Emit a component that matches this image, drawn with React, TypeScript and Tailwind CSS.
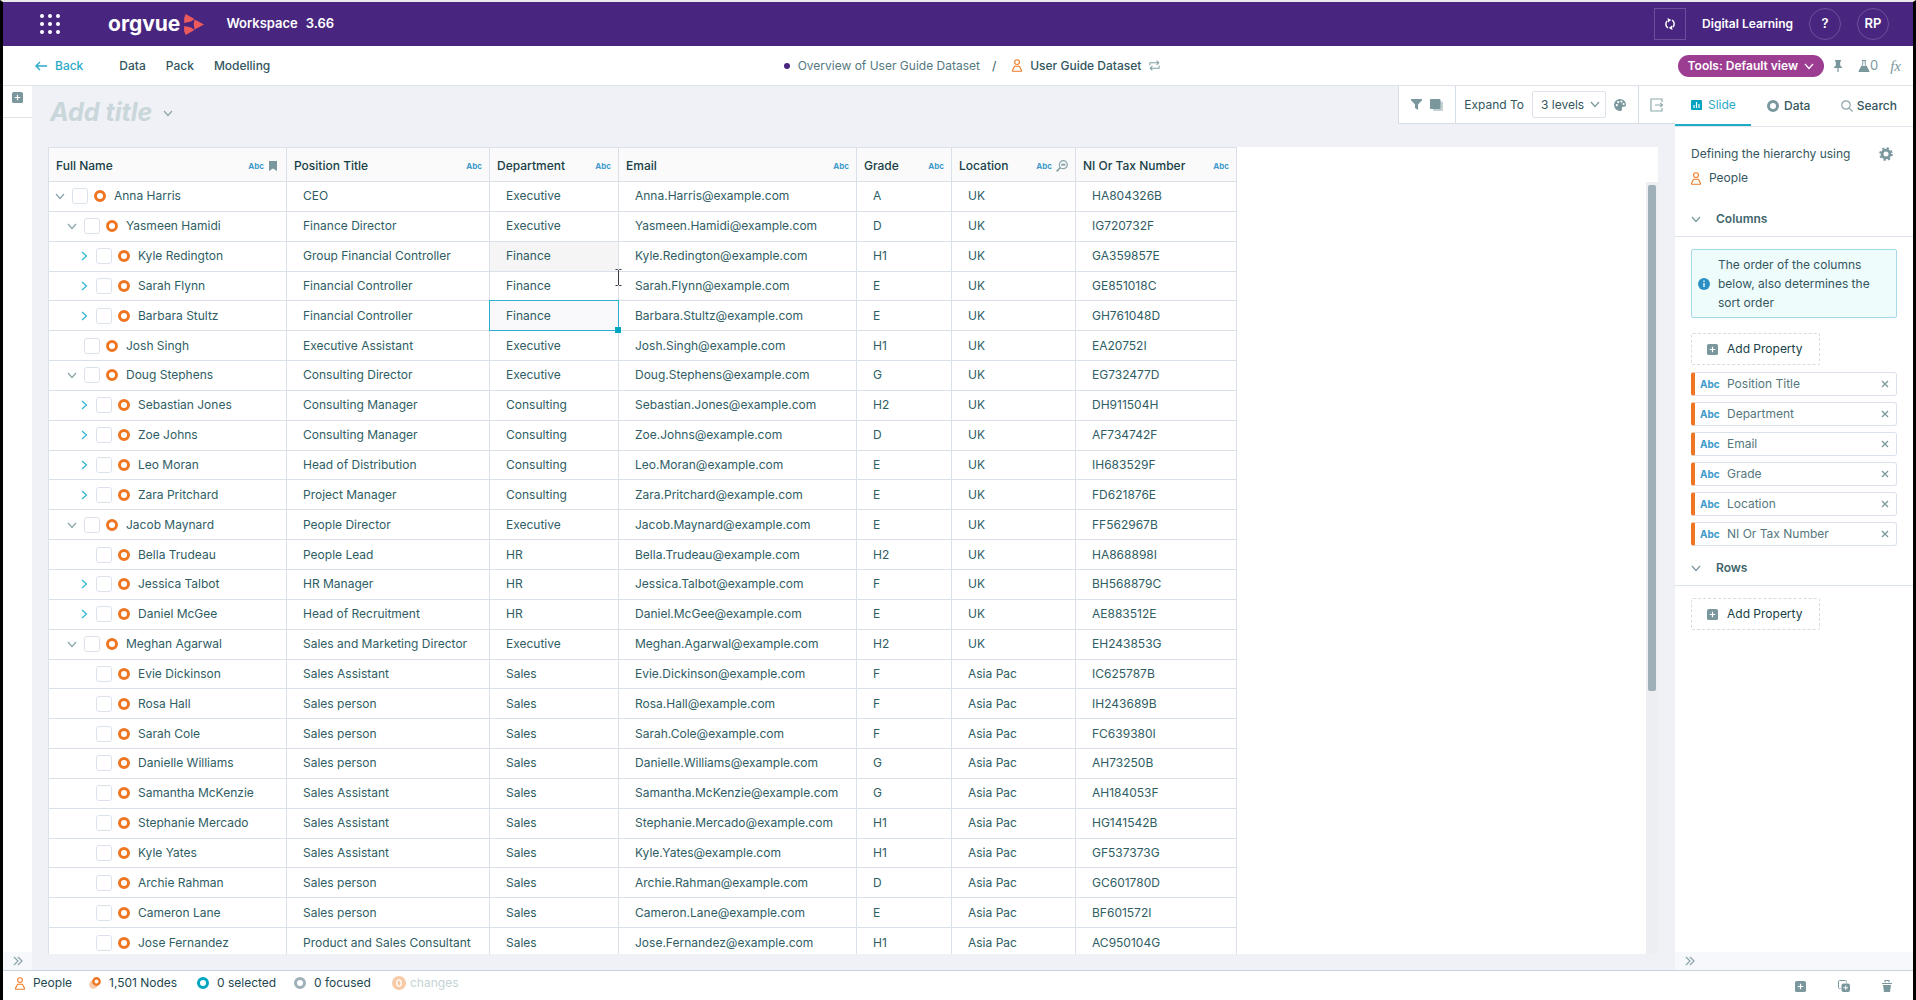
import React from 'react'
import clsx from 'clsx'

type IconProps = { className?: string }

type Row = {
  level: number
  state: 'open' | 'closed' | 'leaf'
  name: string
  title: string
  department: string
  email: string
  grade: string
  location: string
  tax: string
}

const row = (
  level: number,
  state: Row['state'],
  name: string,
  title: string,
  department: string,
  grade: string,
  location: string,
  tax: string,
): Row => ({
  level,
  state,
  name,
  title,
  department,
  email: `${name.replace(' ', '.')}@example.com`,
  grade,
  location,
  tax,
})

const rows: Row[] = [
  row(0, 'open', 'Anna Harris', 'CEO', 'Executive', 'A', 'UK', 'HA804326B'),
  row(1, 'open', 'Yasmeen Hamidi', 'Finance Director', 'Executive', 'D', 'UK', 'IG720732F'),
  row(2, 'closed', 'Kyle Redington', 'Group Financial Controller', 'Finance', 'H1', 'UK', 'GA359857E'),
  row(2, 'closed', 'Sarah Flynn', 'Financial Controller', 'Finance', 'E', 'UK', 'GE851018C'),
  row(2, 'closed', 'Barbara Stultz', 'Financial Controller', 'Finance', 'E', 'UK', 'GH761048D'),
  row(1, 'leaf', 'Josh Singh', 'Executive Assistant', 'Executive', 'H1', 'UK', 'EA20752I'),
  row(1, 'open', 'Doug Stephens', 'Consulting Director', 'Executive', 'G', 'UK', 'EG732477D'),
  row(2, 'closed', 'Sebastian Jones', 'Consulting Manager', 'Consulting', 'H2', 'UK', 'DH911504H'),
  row(2, 'closed', 'Zoe Johns', 'Consulting Manager', 'Consulting', 'D', 'UK', 'AF734742F'),
  row(2, 'closed', 'Leo Moran', 'Head of Distribution', 'Consulting', 'E', 'UK', 'IH683529F'),
  row(2, 'closed', 'Zara Pritchard', 'Project Manager', 'Consulting', 'E', 'UK', 'FD621876E'),
  row(1, 'open', 'Jacob Maynard', 'People Director', 'Executive', 'E', 'UK', 'FF562967B'),
  row(2, 'leaf', 'Bella Trudeau', 'People Lead', 'HR', 'H2', 'UK', 'HA868898I'),
  row(2, 'closed', 'Jessica Talbot', 'HR Manager', 'HR', 'F', 'UK', 'BH568879C'),
  row(2, 'closed', 'Daniel McGee', 'Head of Recruitment', 'HR', 'E', 'UK', 'AE883512E'),
  row(1, 'open', 'Meghan Agarwal', 'Sales and Marketing Director', 'Executive', 'H2', 'UK', 'EH243853G'),
  row(2, 'leaf', 'Evie Dickinson', 'Sales Assistant', 'Sales', 'F', 'Asia Pac', 'IC625787B'),
  row(2, 'leaf', 'Rosa Hall', 'Sales person', 'Sales', 'F', 'Asia Pac', 'IH243689B'),
  row(2, 'leaf', 'Sarah Cole', 'Sales person', 'Sales', 'F', 'Asia Pac', 'FC639380I'),
  row(2, 'leaf', 'Danielle Williams', 'Sales person', 'Sales', 'G', 'Asia Pac', 'AH73250B'),
  row(2, 'leaf', 'Samantha McKenzie', 'Sales Assistant', 'Sales', 'G', 'Asia Pac', 'AH184053F'),
  row(2, 'leaf', 'Stephanie Mercado', 'Sales Assistant', 'Sales', 'H1', 'Asia Pac', 'HG141542B'),
  row(2, 'leaf', 'Kyle Yates', 'Sales Assistant', 'Sales', 'H1', 'Asia Pac', 'GF537373G'),
  row(2, 'leaf', 'Archie Rahman', 'Sales person', 'Sales', 'D', 'Asia Pac', 'GC601780D'),
  row(2, 'leaf', 'Cameron Lane', 'Sales person', 'Sales', 'E', 'Asia Pac', 'BF601572I'),
  row(2, 'leaf', 'Jose Fernandez', 'Product and Sales Consultant', 'Sales', 'H1', 'Asia Pac', 'AC950104G'),
]

const columns = [
  { label: 'Full Name', width: 'w-[238px]' },
  { label: 'Position Title', width: 'w-[203px]' },
  { label: 'Department', width: 'w-[129px]' },
  { label: 'Email', width: 'w-[238px]' },
  { label: 'Grade', width: 'w-[95px]' },
  { label: 'Location', width: 'w-[124px]' },
  { label: 'NI Or Tax Number', width: 'w-[161px]' },
]

const indents = ['pl-[6px]', 'pl-[18px]', 'pl-[30px]']

const properties = ['Position Title', 'Department', 'Email', 'Grade', 'Location', 'NI Or Tax Number']

const Chevron: React.FC<IconProps> = ({ className }) => (
  <svg viewBox="0 0 10 10" className={className} fill="none" stroke="currentColor" strokeWidth="1.2">
    <path d="M1 3l4 4.5L9 3" />
  </svg>
)

const DoubleChevron: React.FC<IconProps> = ({ className }) => (
  <svg viewBox="0 0 10 10" className={className} fill="none" stroke="currentColor" strokeWidth="1.2">
    <path d="M1 1l4 4-4 4M5 1l4 4-4 4" />
  </svg>
)

const PlusBox: React.FC<IconProps> = ({ className }) => (
  <svg viewBox="0 0 12 12" className={className}>
    <rect width="12" height="12" rx="2" fill="currentColor" />
    <path d="M6 3v6M3 6h6" stroke="#fff" strokeWidth="1.3" />
  </svg>
)

const Person: React.FC<IconProps> = ({ className }) => (
  <svg viewBox="0 0 10 13" className={className} fill="none" stroke="#ef7a24" strokeWidth="1.1">
    <circle cx="5" cy="3.1" r="2.4" />
    <path d="M2.6 7.2h4.8L9.4 11v1.3H.6V11z" strokeLinejoin="round" />
  </svg>
)

const Ring: React.FC<IconProps> = ({ className }) => (
  <svg viewBox="0 0 12 12" className={className} fill="none" stroke="currentColor" strokeWidth="3">
    <circle cx="6" cy="6" r="4.5" />
  </svg>
)

const Logo = () => (
  <div className="flex items-center">
    <span className="text-[21px] leading-6 font-bold">orgvue</span>
    <svg viewBox="0 0 21 21" className="ml-[3px] h-[21px] w-[21px]" fill="#ec5a5c">
      <path d="M2.600 0L11.500 5 8 7.400 1.200 9Q.400 4 2.600 0zM2.600 21l8.900-5L8 13.600 1.200 12Q.400 17 2.600 21z" />
      <path d="M11.500 5.600L21 10.500l-9.500 4.900Q9.800 10.500 11.500 5.600z" />
      <path d="M8.600 7.600v5.800L4.400 10.500z" fill="#482680" />
    </svg>
  </div>
)

const Header = () => (
  <header className="flex h-11 shrink-0 items-center bg-[#482680] pr-6 pl-[37px] text-white">
    <button aria-label="Apps">
      <svg viewBox="0 0 20 20" className="h-5 w-5" fill="currentColor">
        {[2, 10, 18].map((y) => [2, 10, 18].map((x) => <circle key={`${x}-${y}`} cx={x} cy={y} r="2" />))}
      </svg>
    </button>
    <div className="ml-12">
      <Logo />
    </div>
    <span className="ml-[22px] text-[13px] font-semibold">Workspace</span>
    <span className="ml-2 text-[13px] font-semibold">3.66</span>
    <button aria-label="Refresh" className="ml-auto flex h-8 w-8 items-center justify-center border border-[#6c4f9b]">
      <svg viewBox="0 0 12 12" className="h-3 w-3" fill="none" stroke="currentColor" strokeWidth="1.5">
        <path d="M4 9.8A4.2 4.2 0 0 1 3.2 3M8 2.2A4.2 4.2 0 0 1 8.8 9" />
        <path d="M3.6 0l3.6 2-3.2 2.4zM8.400 12L4.800 10 8 7.600z" fill="currentColor" stroke="none" />
      </svg>
    </button>
    <span className="ml-4 text-[12px] font-semibold">Digital Learning</span>
    <button className="ml-4 h-8 w-8 rounded-full border border-[#6c4f9b] text-[13px] font-semibold">?</button>
    <button className="ml-4 h-8 w-8 rounded-full border border-[#6c4f9b] text-[13px] font-semibold">RP</button>
  </header>
)

const NavBar = () => (
  <nav className="flex h-10 shrink-0 items-center border-b border-[#dfe3ea] bg-white text-[12px] font-medium text-[#33565e]">
    <div className="flex flex-1 items-center pl-8">
      <a href="#back" className="flex items-center text-[#2ba9c9]">
        <svg viewBox="0 0 12 10" className="mr-2 h-[10px] w-3" fill="none" stroke="currentColor" strokeWidth="1.4">
          <path d="M12 5H1M5 1L1 5l4 4" />
        </svg>
        Back
      </a>
      <a href="#data" className="ml-9">
        Data
      </a>
      <a href="#pack" className="ml-5">
        Pack
      </a>
      <a href="#modelling" className="ml-5">
        Modelling
      </a>
    </div>
    <div className="flex items-center pl-2">
      <span className="mr-2 h-[6px] w-[6px] rounded-full bg-[#482680]" />
      <a href="#overview" className="font-normal text-[#55797f]">
        Overview of User Guide Dataset
      </a>
      <span className="mr-2 ml-3 font-normal">/</span>
      <Person className="mx-2 h-[13px] w-[10px]" />
      <span>User Guide Dataset</span>
      <svg viewBox="0 0 12 12" className="ml-2 h-[11px] w-[11px]" fill="none" stroke="#7f9da3" strokeWidth="1.1">
        <path d="M1 6V3h9M8.300.8L10.600 3 8.300 5.200M11 6v3H2M3.700 6.800L1.400 9l2.300 2.200" />
      </svg>
    </div>
    <div className="flex flex-1 items-center justify-end pr-3 text-[#7a979d]">
      <button className="flex h-[22px] items-center rounded-full bg-[#9c3d91] px-[10px] font-semibold text-white">
        Tools: Default view
        <Chevron className="ml-[6px] h-[10px] w-[10px]" />
      </button>
      <button aria-label="Pin" className="ml-[10px]">
        <svg viewBox="0 0 8 12" className="h-3 w-2" fill="currentColor">
          <path d="M1 0h6v1.400H6.200V5.500L8 7.200V8H4.600v4H3.400V8H0v-.8l1.800-1.700V1.400H1z" />
        </svg>
      </button>
      <button aria-label="Experiments" className="ml-4 flex items-center text-[13px] font-normal">
        <svg viewBox="0 0 12 12" className="h-3 w-3" fill="none" stroke="currentColor">
          <path d="M3.800.5h4.400M4.800.5v4L1 11.500h10L7.200 4.500v-4" />
          <path d="M3.600 6.500h4.800L11 11.500H1z" fill="currentColor" />
        </svg>
        0
      </button>
      <button
        aria-label="Expressions"
        className="ml-3 font-['Liberation_Serif',serif] text-[15px] leading-4 font-normal italic">
        fx
      </button>
    </div>
  </nav>
)

const Toolbar = () => (
  <div className="flex h-[38px] items-stretch border-b border-l border-[#d5dde5] bg-white text-[12px] text-[#33565e]">
    <div className="flex items-center gap-2 border-r border-[#d5dde5] px-3 text-[#7a979d]">
      <button aria-label="Filter">
        <svg viewBox="0 0 11 11" className="h-[11px] w-[11px]" fill="currentColor">
          <path d="M0 0h11v1.200L7 5.500V11L4 9V5.500L0 1.200z" />
        </svg>
      </button>
      <button aria-label="Layers">
        <svg viewBox="0 0 13 12" className="h-3 w-[13px]">
          <rect x="3" y="2.500" width="10" height="9.500" rx="1" fill="#c3d0d4" />
          <rect width="10.500" height="10" rx="1" fill="currentColor" />
        </svg>
      </button>
    </div>
    <div className="flex items-center px-2">
      <label htmlFor="levels">Expand To</label>
      <div className="relative mx-2">
        <select
          id="levels"
          className="block h-[27px] w-[74px] appearance-none rounded-xs border border-[#dde3ea] bg-white pl-2">
          <option>3 levels</option>
        </select>
        <Chevron className="pointer-events-none absolute top-2 right-[6px] h-[10px] w-[10px] text-[#7a979d]" />
      </div>
      <button aria-label="Palette" className="mr-1">
        <svg viewBox="0 0 12 12" className="h-3 w-3">
          <path d="M6 0a6 6 0 0 1 6 5.500c0 2-1.500 2.500-3.500 2.300C7.500 8 8.200 9.500 7.800 11 7.500 12 6.500 12 6 12A6 6 0 0 1 6 0z" fill="#7a979d" />
          <g fill="#fff">
            <circle cx="2.800" cy="6.200" r="1.100" />
            <circle cx="4.200" cy="3.200" r="1.100" />
            <circle cx="7.400" cy="2.600" r="1.100" />
            <circle cx="9.600" cy="5" r="1.100" />
          </g>
        </svg>
      </button>
    </div>
    <div className="flex items-center border-l border-[#d5dde5] px-[11px]">
      <button aria-label="Export">
        <svg viewBox="0 0 14 14" className="h-[14px] w-[14px]" fill="none" stroke="#8fa9ae" strokeWidth="1.2">
          <path d="M12 4V1H1v12h11v-3M5 7h7.500M10.300 4.800L12.500 7l-2.200 2.200" />
        </svg>
      </button>
    </div>
  </div>
)

const TypeTag: React.FC<IconProps> = ({ className }) => (
  <span className={clsx('font-bold text-[#3d9acb]', className)}>Abc</span>
)

const HeaderCell: React.FC<{ label: string; width: string }> = ({ label, width }) => (
  <th
    scope="col"
    className={clsx('border border-[#d9e0e8] bg-[#fafafb] px-[7px] pt-[2px] pb-0 text-left font-normal', width)}>
    <div className="flex items-center">
      <span className="font-medium text-[#173f47]">{label}</span>
      <TypeTag className="ml-auto text-[8px]" />
      {label === 'Full Name' && (
        <svg viewBox="0 0 8 10" className="mr-[2px] ml-[5px] h-[10px] w-2" fill="#7a979d">
          <path d="M0 0h8v10L4 7.500 0 10z" />
        </svg>
      )}
      {label === 'Location' && (
        <svg viewBox="0 0 12 12" className="ml-1 h-3 w-3" fill="none" stroke="#8ba5aa" strokeWidth="1.200">
          <circle cx="7.300" cy="4.700" r="4" />
          <path d="M4.400 7.600L.6 11.400" strokeWidth="1.800" />
          <path d="M5.200 4.700h4.200" strokeWidth="2" />
        </svg>
      )}
    </div>
  </th>
)

const cell = 'border border-[#d9e0e8] p-0 pl-4'

const GridRow: React.FC<{ item: Row }> = ({ item }) => {
  const isSelected = item.name === 'Barbara Stultz'
  const isPointed = item.name === 'Sarah Flynn'
  return (
    <tr className="h-[29px]">
      <td className={clsx('border border-[#d9e0e8] p-0', indents[item.level])}>
        <div className="flex items-center">
          {item.state === 'leaf' ? (
            <span className="w-[10px]" />
          ) : (
            <button
              aria-label={`Toggle ${item.name}`}
              className={item.state === 'open' ? 'text-[#8aa5aa]' : '-rotate-90 text-[#2bb5d0]'}>
              <Chevron className="h-[10px] w-[10px]" />
            </button>
          )}
          <input
            type="checkbox"
            aria-label={`Select ${item.name}`}
            className="ml-[7px] h-4 w-4 appearance-none rounded-[3px] border border-[#dce2eb] bg-white"
          />
          <Ring className="ml-[6px] h-3 w-3 text-[#ee7623]" />
          <span className="ml-2">{item.name}</span>
        </div>
      </td>
      <td className={cell}>{item.title}</td>
      <td
        className={clsx(
          cell,
          'relative',
          item.name === 'Kyle Redington' && 'bg-[#f5f5f6]',
          isSelected && 'bg-[#f9f9fb]',
        )}>
        {item.department}
        {isSelected && (
          <span className="absolute -inset-px border border-[#2fb0cf]">
            <span className="absolute -right-[3px] -bottom-[3px] h-[6px] w-[6px] bg-[#00a5c0]" />
          </span>
        )}
        {isPointed && (
          <svg
            viewBox="0 0 7 17"
            className="absolute -top-[3px] -right-1 z-10 h-[17px] w-[7px]"
            fill="none"
            stroke="#3b3b46">
            <path d="M.5.500h2l1 1 1-1h2M3.500 1.500v14M.5 16.500h2l1-1 1 1h2" />
          </svg>
        )}
      </td>
      <td className={cell}>{item.email}</td>
      <td className={cell}>{item.grade}</td>
      <td className={cell}>{item.location}</td>
      <td className={cell}>{item.tax}</td>
    </tr>
  )
}

const Grid = () => (
  <div className="flex min-h-0 flex-1 items-start overflow-hidden bg-white">
    <table className="h-[811px] w-[1189px] table-fixed border-collapse text-[12px] text-[#2f5d64]">
      <thead>
        <tr className="h-[34px]">
          {columns.map((column) => (
            <HeaderCell key={column.label} {...column} />
          ))}
        </tr>
      </thead>
      <tbody>
        {rows.map((item) => (
          <GridRow key={item.name} item={item} />
        ))}
      </tbody>
    </table>
    <div className="mt-[35px] ml-auto h-full w-3 bg-[#eceef2] px-[2px] pt-[3px]">
      <div className="h-[506px] rounded-xs bg-[#9fb0b8]" />
    </div>
  </div>
)

const Main = () => (
  <main className="flex min-w-0 flex-1 flex-col bg-[#f0f1f6]">
    <div className="flex h-[61px] shrink-0 items-start justify-between">
      <div className="flex items-center pt-[11px] pl-4">
        <input
          aria-label="Title"
          placeholder="Add title"
          className="h-8 w-[115px] bg-transparent pl-[2px] text-[25px] font-bold italic placeholder:text-[#c9d6da] focus:outline-none"
        />
        <button aria-label="Title options" className="text-[#8aa5aa]">
          <Chevron className="h-[10px] w-[10px]" />
        </button>
      </div>
      <Toolbar />
    </div>
    <div className="flex min-h-0 flex-1 flex-col pr-[17px] pb-4 pl-4">
      <Grid />
    </div>
  </main>
)

const AddProperty = () => (
  <button className="flex h-8 w-[129px] items-center rounded-xs border border-dashed border-[#d5dce4] pl-[15px] text-[#173f47]">
    <PlusBox className="mr-[9px] h-[11px] w-[11px] text-[#7a979d]" />
    Add Property
  </button>
)

const SectionTitle: React.FC<{ label: string }> = ({ label }) => (
  <h2 className="flex h-9 items-center border-b border-[#dde3ea] pl-4 font-semibold text-[#3f666d]">
    <Chevron className="mr-[15px] h-[10px] w-[10px] text-[#7a979d]" />
    {label}
  </h2>
)

const SidePanel = () => (
  <aside className="flex w-[238px] shrink-0 flex-col bg-white text-[12px] text-[#33565e]">
    <div role="tablist" className="flex h-[41px] shrink-0 border-b border-[#dfe3ea]">
      <button role="tab" aria-selected="true" className="flex w-[76px] items-center border-b-2 border-[#1fabc7] pl-4 text-[#2ba9c9]">
        <svg viewBox="0 0 11 10" className="mr-[6px] h-[10px] w-[11px]">
          <rect width="11" height="10" rx="1" fill="#00a3bf" />
          <path d="M3 8V5M5.500 8V2M8 8V4" stroke="#fff" strokeWidth="1.200" />
        </svg>
        Slide
      </button>
      <button role="tab" aria-selected="false" className="ml-4 flex items-center font-medium">
        <Ring className="mr-[5px] h-3 w-3 text-[#7a979d]" />
        Data
      </button>
      <button role="tab" aria-selected="false" className="mr-4 ml-auto flex items-center font-medium">
        <svg viewBox="0 0 12 12" className="mr-1 h-3 w-3" fill="none" stroke="#8ba5aa" strokeWidth="1.200">
          <circle cx="5" cy="5" r="4.200" />
          <path d="M8.200 8.200L11.500 11.500" />
        </svg>
        Search
      </button>
    </div>
    <div className="flex items-center justify-between pt-[17px] pr-5 pl-4 leading-5">
      Defining the hierarchy using
      <button aria-label="Settings">
        <svg viewBox="0 0 14 14" className="h-[14px] w-[14px]" fill="none" stroke="#7a979d">
          <circle cx="7" cy="7" r="3.900" strokeWidth="2.800" />
          <circle cx="7" cy="7" r="5.900" strokeWidth="1.800" strokeDasharray="2.300 2.334" />
        </svg>
      </button>
    </div>
    <div className="flex items-center pt-1 pl-4 leading-5">
      <Person className="mr-2 h-[13px] w-[10px]" />
      People
    </div>
    <div className="pt-[13px]">
      <SectionTitle label="Columns" />
    </div>
    <div className="px-4 pt-3">
      <p className="flex items-center rounded-xs border border-[#a5dbe9] bg-[#effcfc] py-[5px] pr-5 pl-[6px] leading-[19px]">
        <svg viewBox="0 0 12 12" className="mr-2 h-3 w-3 shrink-0">
          <circle cx="6" cy="6" r="6" fill="#2b8fc4" />
          <path d="M6 5v4M6 2.500v1.500" stroke="#fff" strokeWidth="1.300" />
        </svg>
        <span>The order of the columns below, also determines the sort order</span>
      </p>
      <div className="pt-[15px] pb-[7px]">
        <AddProperty />
      </div>
      <ul className="flex flex-col gap-[6px]">
        {properties.map((property) => (
          <li
            key={property}
            className="flex h-6 items-center rounded-[3px] border border-l-4 border-[#dce2eb] border-l-[#ee7623] pr-[7px] pl-[5px] text-[#55777d]">
            <TypeTag className="w-[27px] text-[10px]" />
            {property}
            <button aria-label={`Remove ${property}`} className="ml-auto">
              <svg viewBox="0 0 8 8" className="h-2 w-2" stroke="#7a979d" strokeWidth="1.300">
                <path d="M1 1l6 6M7 1L1 7" />
              </svg>
            </button>
          </li>
        ))}
      </ul>
    </div>
    <div className="pt-1">
      <SectionTitle label="Rows" />
    </div>
    <div className="pt-3 pl-4">
      <AddProperty />
    </div>
    <div className="mt-auto flex h-[18px] items-center bg-[#f7f8fc] pl-[10px]">
      <button aria-label="Collapse panel">
        <DoubleChevron className="h-[10px] w-[10px] text-[#8aa5aa]" />
      </button>
    </div>
  </aside>
)

const LeftRail = () => (
  <div className="flex w-[29px] shrink-0 flex-col bg-white">
    <div className="flex h-8 justify-center border-b border-[#dfe3ea] pt-[6px]">
      <button aria-label="Add slide" className="h-[11px]">
        <PlusBox className="h-[11px] w-[11px] text-[#7a979d]" />
      </button>
    </div>
    <div className="mt-auto flex h-[18px] items-center bg-[#f7f8fc] pl-[10px]">
      <button aria-label="Expand rail">
        <DoubleChevron className="h-[10px] w-[10px] text-[#8aa5aa]" />
      </button>
    </div>
  </div>
)

const StatusBar = () => (
  <footer className="flex h-[30px] shrink-0 items-start border-t border-[#c5d2e0] bg-white pt-[2px] pl-3 text-[12px] leading-5 text-[#24484f]">
    <span className="flex w-[70px] items-center">
      <Person className="mr-2 h-[13px] w-[10px]" />
      People
    </span>
    <span className="flex w-[108px] items-center">
      <svg viewBox="0 0 12 12" className="mr-2 ml-1 h-3 w-3" fill="none">
        <circle cx="4.500" cy="7.500" r="4.300" fill="#f8cba8" />
        <circle cx="7.500" cy="4.500" r="3.200" fill="#fff" stroke="#ee7623" strokeWidth="2.400" />
      </svg>
      1,501 Nodes
    </span>
    <span className="flex w-[97px] items-center">
      <Ring className="mr-2 ml-1 h-3 w-3 text-[#00a5c0]" />0 selected
    </span>
    <span className="flex w-[98px] items-center">
      <Ring className="mr-2 ml-1 h-3 w-3 text-[#9fb0b8]" />0 focused
    </span>
    <span className="flex items-center text-[#c5d3d6]">
      <svg viewBox="0 0 14 14" className="mr-1 ml-1 h-[14px] w-[14px]" fill="none">
        <circle cx="7" cy="7" r="7" fill="#f8cba8" />
        <ellipse cx="7" cy="7" rx="2.200" ry="3.200" stroke="#fff" strokeWidth="1.300" />
      </svg>
      changes
    </span>
    <div className="ml-auto flex items-center gap-8 pt-[7px] pr-[21px] text-[#7a979d]">
      <button aria-label="Add">
        <PlusBox className="h-[11px] w-[11px]" />
      </button>
      <button aria-label="Duplicate">
        <svg viewBox="0 0 12 12" className="h-3 w-3">
          <path d="M2.500 8.500H1.500a1 1 0 0 1-1-1v-6a1 1 0 0 1 1-1h6a1 1 0 0 1 1 1v1" fill="none" stroke="currentColor" />
          <rect x="3.500" y="3.500" width="8.500" height="8.500" rx="2" fill="currentColor" />
          <path d="M7.750 5.500v4.500M5.500 7.750H10" stroke="#fff" />
        </svg>
      </button>
      <button aria-label="Delete">
        <svg viewBox="0 0 10 12" className="h-3 w-[10px]" fill="currentColor">
          <path d="M0 3h10v1H0zM2.500 0h5v2.500h-1V1h-3v1.500h-1zM1 5h8l-1 7H2z" />
        </svg>
      </button>
    </div>
  </footer>
)

export default function App() {
  return (
    <div className="flex h-screen flex-col overflow-hidden border-x-[3px] border-t-2 border-x-black border-t-[#e9e9ec] bg-white font-['Inter',sans-serif]">
      <Header />
      <NavBar />
      <div className="flex min-h-0 flex-1">
        <LeftRail />
        <Main />
        <SidePanel />
      </div>
      <StatusBar />
    </div>
  )
}
